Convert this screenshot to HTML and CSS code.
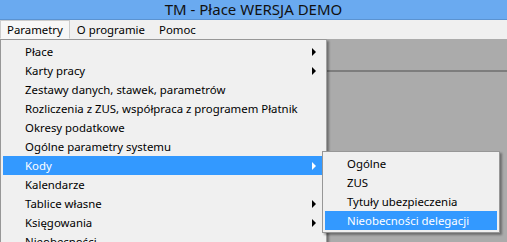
FILE: index.html
```html
<!DOCTYPE html>
<html lang="pl">
<head>
    <meta charset="UTF-8">
    <title>TM - Płace WERSJA DEMO</title>
    <link rel="stylesheet" href="styles.css">
</head>
<body>

<div class="window">
    <div class="titlebar">TM - Płace WERSJA DEMO</div>

    <div class="menubar">
        <span class="menubar-item active">Parametry</span>
        <span class="menubar-item">O programie</span>
        <span class="menubar-item">Pomoc</span>
    </div>

    <div class="workspace">
        <div class="child-window"></div>

        <!-- Parametry dropdown -->
        <ul class="menu main-menu">
            <li class="has-sub">Płace</li>
            <li class="has-sub">Karty pracy</li>
            <li>Zestawy danych, stawek, parametrów</li>
            <li>Rozliczenia z ZUS, współpraca z programem Płatnik</li>
            <li>Okresy podatkowe</li>
            <li>Ogólne parametry systemu</li>
            <li class="has-sub selected">Kody</li>
            <li>Kalendarze</li>
            <li class="has-sub">Tablice własne</li>
            <li class="has-sub">Księgowania</li>
            <li>Nieobecności</li>
        </ul>

        <!-- Kody submenu -->
        <ul class="menu sub-menu">
            <li>Ogólne</li>
            <li>ZUS</li>
            <li>Tytuły ubezpieczenia</li>
            <li class="selected">Nieobecności delegacji</li>
        </ul>
    </div>
</div>

</body>
</html>
```

FILE: styles.css
```css
body {
    margin: 0;
    font-family: "Noto Sans", "Open Sans", sans-serif;
    font-size: 11.4px;
    color: #000;
    overflow: hidden;
}

.window {
    width: 507px;
    height: 242px;
    display: flex;
    flex-direction: column;
    overflow: hidden;
}

.titlebar {
    height: 19px;
    line-height: 19px;
    background-color: #6aaaf0;
    border-bottom: 1px solid #5b93d1;
    text-align: center;
    font-size: 15px;
    color: #111;
}

.menubar {
    height: 19px;
    display: flex;
    background-color: #f0f0f0;
}

.menubar-item {
    padding: 0 6px;
    line-height: 18px;
    border: 1px solid transparent;
    box-sizing: border-box;
    height: 19px;
}

.menubar-item.active {
    background-color: #f7f7f7;
    border-color: #ccc #ccc transparent #ccc;
}

.workspace {
    flex: 1;
    position: relative;
    background-color: #ababab;
}

.child-window {
    margin-top: 31px;
    border-top: 2px solid #7d7d7d;
}

.menu {
    list-style: none;
    margin: 0;
    padding: 2px;
    background-color: #f0f0f0;
    border: 1px solid #979797;
    position: absolute;
    box-shadow: 2px 2px 2px rgba(0, 0, 0, 0.35);
}

.menu li {
    height: 19px;
    line-height: 19px;
    position: relative;
    white-space: nowrap;
}

.menu li.selected {
    background-color: #3399ff;
    color: #fff;
}

.menu li.has-sub::after {
    content: "";
    position: absolute;
    right: 8px;
    top: 6px;
    border-left: 4px solid #000;
    border-top: 4px solid transparent;
    border-bottom: 4px solid transparent;
}

.menu li.selected.has-sub::after {
    border-left-color: #fff;
}

.main-menu {
    left: 0;
    top: 0;
    width: 321px;
    height: 240px;
    border-right-color: #a0a0a0;
}

.main-menu li {
    padding-left: 22px;
}

.sub-menu {
    left: 322px;
    top: 112px;
    width: 172px;
}

.sub-menu li {
    padding-left: 22px;
}
```
